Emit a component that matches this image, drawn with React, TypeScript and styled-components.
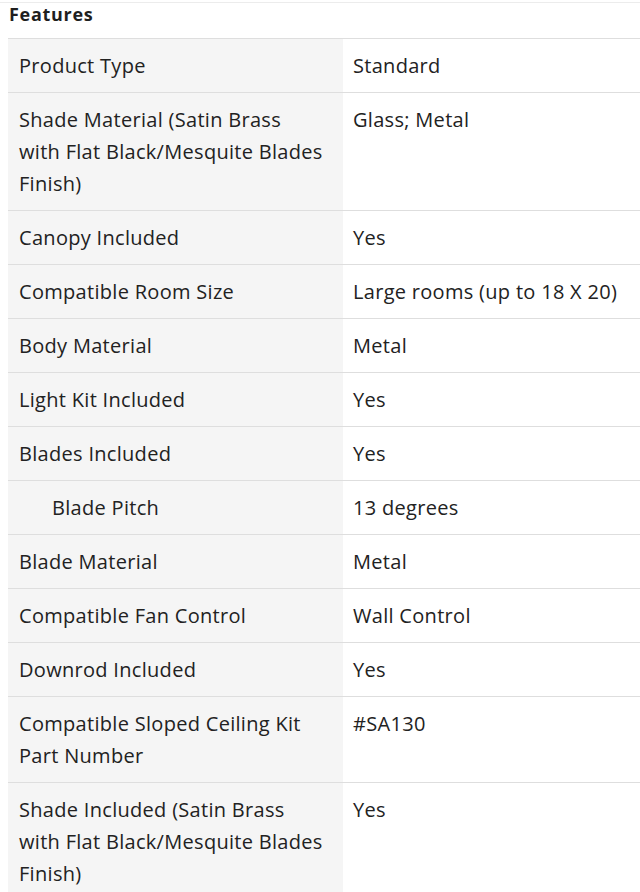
import React from "react";
import styled, { createGlobalStyle } from "styled-components";

const Global = createGlobalStyle`
  html, body { margin: 0; padding: 0; background: #ffffff; }
  body { font-family: "Open Sans", "Noto Sans", sans-serif; color: #222222; }
`;

const Page = styled.div`
  width: 640px;
  overflow: hidden;
  border-top: 1px solid #ececec;
  margin-top: 2px;
`;

const Title = styled.h2`
  margin: 0;
  padding: 0 0 0 9px;
  height: 35px;
  line-height: 22px;
  font-size: 18px;
  font-weight: 700;
  letter-spacing: 0.7px;
  color: #1f1f1f;
`;

const Table = styled.div`
  margin-left: 8px;
  width: 632px;
  display: grid;
  grid-template-columns: 335px 1fr;
  border-bottom: 1px solid #dedede;
`;

const Cell = styled.div<{ $label?: boolean; $indent?: boolean }>`
  border-top: 1px solid #dedede;
  padding: 11px 4px 10px ${(p) => (p.$indent ? "44px" : p.$label ? "11px" : "10px")};
  background: ${(p) => (p.$label ? "#f5f5f5" : "#ffffff")};
  font-size: 20px;
  letter-spacing: 0.3px;
  line-height: 32px;
  color: #222222;
  white-space: pre-line;
`;

const rows: { label: string; value: string; indent?: boolean }[] = [
  { label: "Product Type", value: "Standard" },
  { label: "Shade Material (Satin Brass\nwith Flat Black/Mesquite Blades\nFinish)", value: "Glass; Metal" },
  { label: "Canopy Included", value: "Yes" },
  { label: "Compatible Room Size", value: "Large rooms (up to 18 X 20)" },
  { label: "Body Material", value: "Metal" },
  { label: "Light Kit Included", value: "Yes" },
  { label: "Blades Included", value: "Yes" },
  { label: "Blade Pitch", value: "13 degrees", indent: true },
  { label: "Blade Material", value: "Metal" },
  { label: "Compatible Fan Control", value: "Wall Control" },
  { label: "Downrod Included", value: "Yes" },
  { label: "Compatible Sloped Ceiling Kit\nPart Number", value: "#SA130" },
  { label: "Shade Included (Satin Brass\nwith Flat Black/Mesquite Blades\nFinish)", value: "Yes" },
];

export default function App() {
  return (
    <>
      <Global />
      <Page>
        <Title>Features</Title>
        <Table>
          {rows.map((r) => (
            <React.Fragment key={r.label}>
              <Cell $label $indent={r.indent}>{r.label}</Cell>
              <Cell>{r.value}</Cell>
            </React.Fragment>
          ))}
        </Table>
      </Page>
    </>
  );
}
